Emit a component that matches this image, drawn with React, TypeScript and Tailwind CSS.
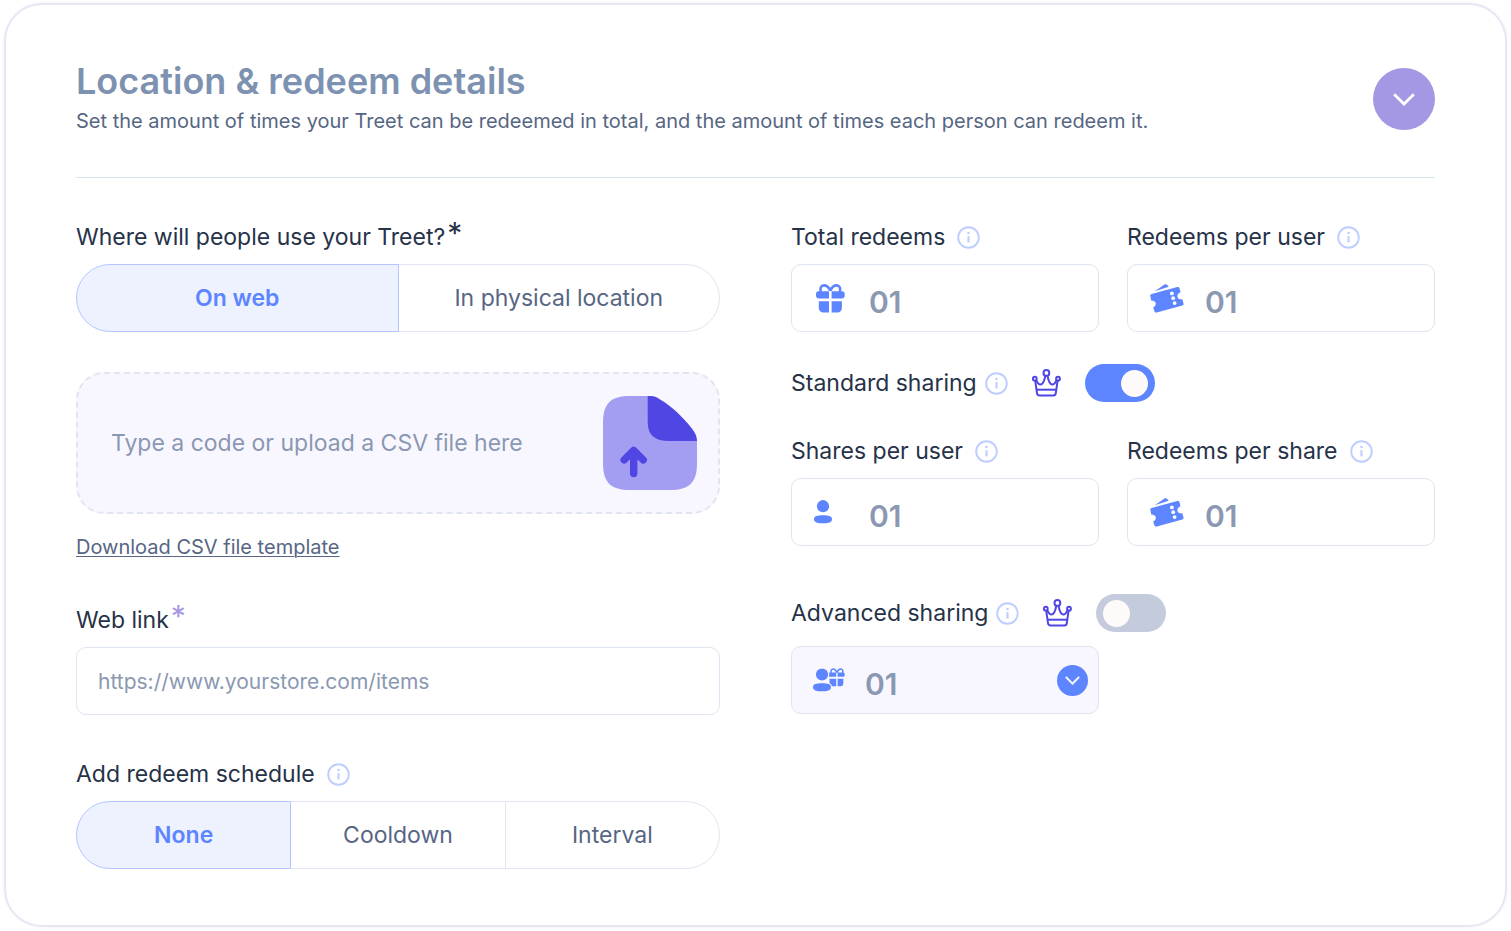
import { useState, type ReactNode } from "react";

function InfoIcon() {
  return (
    <svg className="size-[23px] shrink-0" viewBox="0 0 23 23" fill="none" aria-hidden="true">
      <circle cx="11.5" cy="11.5" r="10.3" stroke="#bfceff" strokeWidth="1.9" />
      <path d="M11.5 10.2v6.200" stroke="#bfceff" strokeWidth="2.200" />
      <circle cx="11.5" cy="7" r="1.300" fill="#bfceff" />
    </svg>
  );
}

function ChevronIcon({ className }: { className: string }) {
  return (
    <svg className={className} viewBox="0 0 22 13" fill="none" aria-hidden="true">
      <path d="M1.200 1.200 11 11l9.800-9.800" stroke="#fff" strokeWidth="2.800" />
    </svg>
  );
}

function CrownIcon() {
  return (
    <svg className="h-7 w-[29px] shrink-0" viewBox="0 0 29 28" fill="none" stroke="#5046e4" strokeWidth="2" strokeLinejoin="round" aria-hidden="true">
      <circle cx="14.4" cy="3.9" r="2.9" />
      <circle cx="2.8" cy="9.7" r="1.9" />
      <circle cx="26" cy="9.7" r="1.9" />
      <path d="M3.2 11.7 5 24.2c.2 1.6 1 2.3 2.5 2.3h13.8c1.500 0 2.300-.7 2.500-2.300l1.800-12.500" />
      <path d="M4.300 11.400c1.200 2.700 2.600 4.100 4.100 4.100 2.300 0 3.900-3.200 4.900-8.800M24.500 11.400c-1.200 2.700-2.600 4.100-4.100 4.100-2.300 0-3.900-3.200-4.900-8.800" />
      <path d="M4.600 20.700h19.600" />
    </svg>
  );
}

function GiftIcon() {
  return (
    <svg className="ml-0.5 size-[29px]" viewBox="0 0 29 29" fill="#5c85ff" aria-hidden="true">
      <path d="M2.600 7.200H13v7.200H3A3 3 0 0 1 0 11.400V10a2.800 2.800 0 0 1 2.600-2.800ZM15.600 7.200H26a2.800 2.800 0 0 1 2.700 2.800v1.400a3 3 0 0 1-3 3H15.600ZM2.800 17.200H13v11.300H7.300a4.500 4.500 0 0 1-4.500-4.500ZM15.600 17.200h10.300V24a4.500 4.500 0 0 1-4.500 4.500h-5.800Z" />
      <path d="M14.300 6.600C12.600 3 10.500 1.400 8 1.400 5 1.400 3.700 4.300 4.800 7.800M14.300 6.600c1.700-3.600 3.800-5.200 6.300-5.200 3 0 4.300 2.900 3.200 6.400" fill="none" stroke="#5c85ff" strokeWidth="2.600" />
    </svg>
  );
}

function TicketIcon() {
  return (
    <svg className="h-[29px] w-[34px]" viewBox="0 0 34 29" fill="#5c85ff" aria-hidden="true">
      <path d="M4.700 7.200 14.500.6c1-.6 1.900-.5 2.700.3l1.500 1.800Z" />
      <path d="M1.600 10 27.300 3.100c1.100-.3 1.900.2 2.200 1.200l1 4c-2.600 1.200-3.500 2.700-3 4.600.5 1.800 2.100 2.600 4.800 2.300l1.200 4.200c.3 1-.2 1.800-1.200 2.100L6.700 28.500c-1.100.3-1.900-.1-2.300-1.200l-1.200-3.700c2.100-1.400 2.900-2.900 2.500-4.500-.5-1.800-2-2.700-4.500-2.700L.4 12.200c-.3-1.100.2-1.900 1.200-2.200Z" />
      <g fill="#fff">
        <circle cx="21.900" cy="9.400" r="1.900" />
        <circle cx="23.200" cy="14.200" r="1.900" />
        <circle cx="24.600" cy="19.100" r="1.900" />
      </g>
    </svg>
  );
}

function PersonIcon() {
  return (
    <svg className="h-6 w-[18px]" viewBox="0 0 18 24" fill="#5c85ff" aria-hidden="true">
      <circle cx="9" cy="6.200" r="6.100" />
      <path d="M9 15.300c5.800 0 9 .9 9 3.900s-3.200 4.100-9 4.100-9-1.100-9-4.100 3.200-3.900 9-3.900Z" />
    </svg>
  );
}

function PersonGiftIcon() {
  return (
    <svg className="h-6 w-8" viewBox="0 0 32 24" fill="#5c85ff" aria-hidden="true">
      <path d="M16 4.600h7.200v4.100H16ZM24.600 4.600h5.600a1.500 1.500 0 0 1 1.500 1.500v1.100a1.500 1.500 0 0 1-1.500 1.500h-5.600ZM16.500 10.700h6.700v7.500h-6.700ZM24.600 10.700h5.700v4.600a2.900 2.900 0 0 1-2.900 2.900h-2.800Z" />
      <path d="M23.900 4.600c-1-2.500-2.300-3.600-3.800-3.600-1.700 0-2.600 1.700-1.900 3.900M23.900 4.600c1-2.500 2.300-3.600 3.800-3.600 1.700 0 2.600 1.700 1.900 3.900" fill="none" stroke="#5c85ff" strokeWidth="1.500" />
      <g stroke="#f8f7ff" strokeWidth="2.400" paintOrder="stroke">
        <circle cx="9" cy="6.500" r="6.100" />
        <path d="M9 15.300c5.800 0 9 .9 9 3.900s-3.200 4.100-9 4.100-9-1.100-9-4.100 3.200-3.900 9-3.900Z" />
      </g>
    </svg>
  );
}

function UploadFileIcon() {
  return (
    <svg className="size-[94px]" viewBox="0 0 94 94" fill="none" aria-hidden="true">
      <path d="M45 0H27C8 0 0 7 0 27v40c0 20 8 27 27 27h40c19 0 27-7 27-27V44L50 0Z" fill="#a49ef2" />
      <path d="M44.700 0C52 0 53 .7 58 4c6 3.800 11 7.500 15.500 11.800C79 21 84 26.500 88.500 32c3.500 4.500 5.500 8 5.500 13H66c-14 0-21.300-5.500-21.300-19Z" fill="#5046e4" />
      <path d="M30.700 77.500V55M21.200 63.800l9.500-9.300 9.500 9.300" stroke="#5046e4" strokeWidth="7.400" strokeLinecap="round" strokeLinejoin="round" />
    </svg>
  );
}

function Segmented({ name, options }: { name: string; options: string[] }) {
  const [selected, setSelected] = useState(options[0]);
  return (
    <div role="group" aria-label={name} className="mt-2 flex h-[68px]">
      {options.map((option) => (
        <button
          key={option}
          type="button"
          aria-pressed={option === selected}
          onClick={() => setSelected(option)}
          className="-ml-px flex-1 border border-[#e1e5f1] text-[#566683] first:ml-0 first:rounded-l-full last:rounded-r-full aria-pressed:z-10 aria-pressed:border-[#b3c6ff] aria-pressed:bg-[#eef2ff] aria-pressed:font-semibold aria-pressed:text-[#5c85ff]"
        >
          {option}
        </button>
      ))}
    </div>
  );
}

function NumberField({ id, label, icon }: { id: string; label: string; icon: ReactNode }) {
  return (
    <div>
      <div className="flex h-[38px] items-center gap-3">
        <label htmlFor={id}>{label}</label>
        <InfoIcon />
      </div>
      <div className="mt-2 flex h-[68px] items-center rounded-[10px] border border-[#dfe4f1] pl-[21px]">
        <span className="flex w-14 shrink-0 items-center pl-px">{icon}</span>
        <input id={id} defaultValue="01" className="h-full w-full min-w-0 bg-transparent pt-2 text-[30px] font-semibold text-[#8a98b2] outline-none" />
      </div>
    </div>
  );
}

function SharingToggle({ id, label, on }: { id: string; label: string; on: boolean }) {
  return (
    <div className="flex h-[38px] items-center">
      <label htmlFor={id}>{label}</label>
      <span className="ml-2 flex items-center gap-6">
        <InfoIcon />
        <CrownIcon />
        <input
          id={id}
          type="checkbox"
          role="switch"
          defaultChecked={on}
          className="flex h-[38px] w-[70px] appearance-none items-center rounded-full bg-[#c3cbdc] px-[7px] before:size-[27px] before:rounded-full before:bg-[#fffafa] checked:justify-end checked:bg-[#5c85ff]"
        />
      </span>
    </div>
  );
}

export default function App() {
  return (
    <main className="bg-white px-1 pt-[3px] pb-1 font-['Inter',sans-serif] text-[23px] leading-8 text-[#263248]">
      <section className="rounded-[38px] border-2 border-[#e7e7f4] px-[70px] pt-[54px] pb-14 shadow-[0_0_3px_#eeeef8]">
        <header className="flex items-center justify-between border-b border-[#d4e6ea] pb-[38px]">
          <div>
            <h1 className="text-[36px] leading-[44px] font-semibold text-[#7d92b1]">Location &amp; redeem details</h1>
            <p className="text-xl leading-9 text-[#566683]">
              Set the amount of times your Treet can be redeemed in total, and the amount of times each person can redeem it.
            </p>
          </div>
          <button type="button" aria-label="Collapse section" className="flex size-[62px] shrink-0 items-center justify-center rounded-full bg-[#a498e5]">
            <ChevronIcon className="h-[13px] w-[22px]" />
          </button>
        </header>

        <div className="grid grid-cols-2 gap-[71px] pt-10">
          <div>
            <div className="flex h-[38px] items-center gap-0.5">
              <span>Where will people use your Treet?</span>
              <span className="pb-2 text-[30px] leading-none">*</span>
            </div>
            <Segmented name="Where will people use your Treet?" options={["On web", "In physical location"]} />

            <div className="mt-10 flex h-[142px] items-center rounded-[28px] border-2 border-dashed border-[#e0e5f0] bg-[#f8f7ff] pr-[21px] pl-[33px]">
              <input
                aria-label="Redeem code"
                placeholder="Type a code or upload a CSV file here"
                className="h-full min-w-0 flex-1 bg-transparent outline-none placeholder:text-[#8a98b2]"
              />
              <button type="button" aria-label="Upload CSV file">
                <UploadFileIcon />
              </button>
            </div>

            <a href="#template" className="mt-5 block w-fit text-xl leading-[27px] text-[#566683] underline decoration-1 underline-offset-2">
              Download CSV file template
            </a>

            <div className="mt-10 flex h-[38px] items-center gap-0.5">
              <label htmlFor="web-link">Web link</label>
              <span className="pb-2 text-[30px] leading-none text-[#a498e5]">*</span>
            </div>
            <input
              id="web-link"
              placeholder="https://www.yourstore.com/items"
              className="mt-2 block h-[68px] w-full rounded-[10px] border border-[#dfe4f1] px-[21px] text-[21px] outline-none placeholder:text-[#8a98b2]"
            />

            <div className="mt-10 flex h-[38px] items-center gap-3">
              <span>Add redeem schedule</span>
              <InfoIcon />
            </div>
            <Segmented name="Add redeem schedule" options={["None", "Cooldown", "Interval"]} />
          </div>

          <div>
            <div className="grid grid-cols-2 gap-7">
              <NumberField id="total-redeems" label="Total redeems" icon={<GiftIcon />} />
              <NumberField id="redeems-per-user" label="Redeems per user" icon={<TicketIcon />} />
            </div>

            <div className="mt-8">
              <SharingToggle id="standard-sharing" label="Standard sharing" on />
            </div>

            <div className="mt-[30px] grid grid-cols-2 gap-7">
              <NumberField id="shares-per-user" label="Shares per user" icon={<PersonIcon />} />
              <NumberField id="redeems-per-share" label="Redeems per share" icon={<TicketIcon />} />
            </div>

            <div className="mt-12">
              <SharingToggle id="advanced-sharing" label="Advanced sharing" on={false} />
            </div>
            <div className="mt-[14px] grid grid-cols-2 gap-7">
              <div className="flex h-[68px] items-center rounded-[10px] border border-[#dfe4f1] bg-[#f8f7ff] pr-2.5 pl-[21px]">
                <span className="flex w-[52px] items-center">
                  <PersonGiftIcon />
                </span>
                <input
                  aria-label="Advanced sharing amount"
                  defaultValue="01"
                  className="h-full min-w-0 flex-1 bg-transparent pt-2 text-[30px] font-semibold text-[#8a98b2] outline-none"
                />
                <button type="button" aria-label="Show options" className="flex size-[31px] items-center justify-center rounded-full bg-[#5c85ff]">
                  <ChevronIcon className="h-[9px] w-[15px]" />
                </button>
              </div>
            </div>
          </div>
        </div>
      </section>
    </main>
  );
}
